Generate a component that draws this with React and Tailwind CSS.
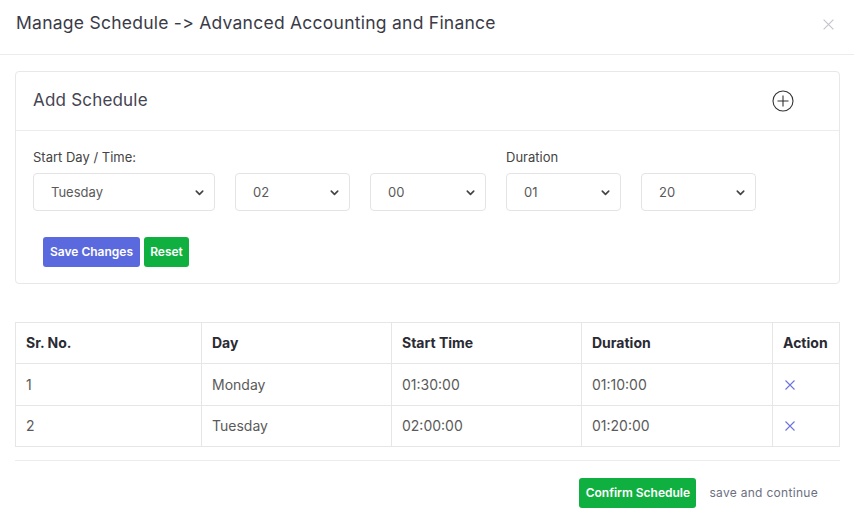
import React from 'react';

const font = { fontFamily: 'Inter, "Noto Sans", sans-serif' };

const Chevron = () => (
  <svg width="11" height="11" viewBox="0 0 12 12" className="text-[#444]">
    <path d="M2.5 4.5 L6 8 L9.5 4.5" fill="none" stroke="currentColor" strokeWidth="1.8" strokeLinecap="round" strokeLinejoin="round" />
  </svg>
);

const SelectBox = ({ value, width }) => (
  <div className={`${width} h-[38px] flex items-center justify-between pl-[17px] pr-[9px] border border-[#e4e4e4] rounded-[4px] bg-white text-[13px] text-[#5a5a5a]`}>
    <span className="pt-px">{value}</span>
    <Chevron />
  </div>
);

const XIcon = ({ className, size = 12 }) => (
  <svg width={size} height={size} viewBox="0 0 12 12" className={className}>
    <path d="M1.5 1.5 L10.5 10.5 M10.5 1.5 L1.5 10.5" fill="none" stroke="currentColor" strokeWidth="1.1" />
  </svg>
);

const rows = [
  { no: 1, day: 'Monday', start: '01:30:00', duration: '01:10:00', h: 'h-[42px]' },
  { no: 2, day: 'Tuesday', start: '02:00:00', duration: '01:20:00', h: 'h-[41px]' },
];

export default function App() {
  return (
    <div className="w-[854px] h-[526px] bg-white overflow-hidden relative" style={font}>
      {/* header */}
      <div className="h-[55px] flex items-start justify-between pl-4 pr-[19px] pt-[11px] border-b border-[#ececec]">
        <h2 className="text-[17.5px] leading-[24px] text-[#3b3b48] tracking-[0.25px]">Manage Schedule -&gt; Advanced Accounting and Finance</h2>
        <div className="pt-[7px]">
          <XIcon className="text-[#c4c4cc]" size={13} />
        </div>
      </div>

      <div className="px-[15px] pt-4">
        {/* add schedule card */}
        <div className="border border-[#e8e8e8] rounded-[4px] w-[825px]">
          <div className="h-[59px] flex items-center justify-between pl-[17px] pr-[45px] border-b border-[#ececec]">
            <h3 className="text-[17px] text-[#444452] tracking-[0.2px]">Add Schedule</h3>
            <svg width="22" height="22" viewBox="0 0 22 22" className="text-[#333]">
              <circle cx="11" cy="11" r="10" fill="none" stroke="currentColor" strokeWidth="1.1" />
              <path d="M11 5.5 V16.5 M5.5 11 H16.5" stroke="currentColor" strokeWidth="1.1" />
            </svg>
          </div>
          <div className="pl-[17px] pt-[18px] pb-4">
            <div className="flex">
              <div className="flex flex-col">
                <span className="text-[13px] text-[#444] mb-[8px] h-[16px] leading-[16px]">Start Day / Time:</span>
                <div className="flex gap-[20px]">
                  <SelectBox value="Tuesday" width="w-[182px]" />
                  <SelectBox value="02" width="w-[115px]" />
                  <SelectBox value="00" width="w-[116px]" />
                </div>
              </div>
              <div className="flex flex-col ml-[20px]">
                <span className="text-[13px] text-[#444] mb-[8px] h-[16px] leading-[16px]">Duration</span>
                <div className="flex gap-[20px]">
                  <SelectBox value="01" width="w-[115px]" />
                  <SelectBox value="20" width="w-[115px]" />
                </div>
              </div>
            </div>
            <div className="flex gap-1 mt-[26px] ml-[10px]">
              <button className="h-[30px] w-[97px] rounded-[3px] bg-[#5b69de] text-white text-[12px] font-semibold">Save Changes</button>
              <button className="h-[30px] w-[45px] rounded-[3px] bg-[#10b040] text-white text-[12px] font-semibold">Reset</button>
            </div>
          </div>
        </div>

        {/* table */}
        <table className="mt-[38px] w-[825px] border-collapse text-[14px]">
          <thead>
            <tr className="h-[41px]">
              <th className="w-[186px] border border-[#e6e6e6] text-left pl-[10px] pb-px font-bold text-[#2a2a33]">Sr. No.</th>
              <th className="w-[190px] border border-[#e6e6e6] text-left pl-[10px] pb-px font-bold text-[#2a2a33]">Day</th>
              <th className="w-[190px] border border-[#e6e6e6] text-left pl-[10px] pb-px font-bold text-[#2a2a33]">Start Time</th>
              <th className="w-[191px] border border-[#e6e6e6] text-left pl-[10px] pb-px font-bold text-[#2a2a33]">Duration</th>
              <th className="border border-[#e6e6e6] text-left pl-[10px] pb-px font-bold text-[#2a2a33]">Action</th>
            </tr>
          </thead>
          <tbody>
            {rows.map(r => (
              <tr key={r.no} className={`${r.h} text-[#5a5a5a]`}>
                <td className="border border-[#e6e6e6] pl-[10px] pb-px">{r.no}</td>
                <td className="border border-[#e6e6e6] pl-[10px] pb-px">{r.day}</td>
                <td className="border border-[#e6e6e6] pl-[10px] pb-px">{r.start}</td>
                <td className="border border-[#e6e6e6] pl-[10px] pb-px">{r.duration}</td>
                <td className="border border-[#e6e6e6] pl-[11px]">
                  <XIcon className="text-[#6d74d8]" />
                </td>
              </tr>
            ))}
          </tbody>
        </table>

        {/* footer */}
        <div className="mt-[13px] w-[825px] border-t border-[#ececec] flex items-center justify-end gap-[13px] pt-[17px] pr-[22px]">
          <button className="h-[30px] w-[117px] rounded-[3px] bg-[#10b040] text-white text-[12px] font-semibold">Confirm Schedule</button>
          <span className="text-[12px] text-[#6c6f82] tracking-[0.3px]">save and continue</span>
        </div>
      </div>
    </div>
  );
}
